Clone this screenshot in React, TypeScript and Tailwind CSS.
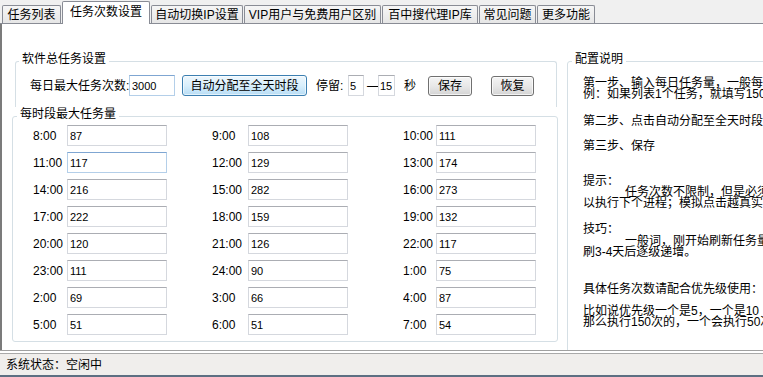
import React from 'react';

interface Tab {
  label: string;
  width: string;
  selected?: boolean;
}

interface Slot {
  time: string;
  value: string;
  active?: boolean;
}

const tabs: Tab[] = [
  { label: '任务列表', width: 'w-[59px]' },
  { label: '任务次数设置', width: 'w-[88px]', selected: true },
  { label: '自动切换IP设置', width: 'w-[92px]' },
  { label: 'VIP用户与免费用户区别', width: 'w-[137px]' },
  { label: '百中搜代理IP库', width: 'w-[96px]' },
  { label: '常见问题', width: 'w-[57px]' },
  { label: '更多功能', width: 'w-[58px]' },
];

const rows: Slot[][] = [
  [{ time: '8:00', value: '87' }, { time: '9:00', value: '108' }, { time: '10:00', value: '111' }],
  [{ time: '11:00', value: '117', active: true }, { time: '12:00', value: '129' }, { time: '13:00', value: '174' }],
  [{ time: '14:00', value: '216' }, { time: '15:00', value: '282' }, { time: '16:00', value: '273' }],
  [{ time: '17:00', value: '222' }, { time: '18:00', value: '159' }, { time: '19:00', value: '132' }],
  [{ time: '20:00', value: '120' }, { time: '21:00', value: '126' }, { time: '22:00', value: '117' }],
  [{ time: '23:00', value: '111' }, { time: '24:00', value: '90' }, { time: '1:00', value: '75' }],
  [{ time: '2:00', value: '69' }, { time: '3:00', value: '66' }, { time: '4:00', value: '87' }],
  [{ time: '5:00', value: '51' }, { time: '6:00', value: '51' }, { time: '7:00', value: '54' }],
];

// cell width + label width for the three columns
const columns = [
  { cell: 'w-[179px]', label: 'w-[34px]' },
  { cell: 'w-[191px]', label: 'w-[36px]' },
  { cell: 'w-[133px]', label: 'w-[33px]' },
];

const TextBox: React.FC<{ value: string; width: string; active?: boolean; tight?: boolean }> = ({
  value,
  width,
  active,
  tight,
}) => (
  <input
    readOnly
    value={value}
    className={`h-[21px] shrink-0 bg-white text-[11px] text-black outline-none border ${tight ? 'px-px' : 'px-[2px]'} ${
      active ? 'border-[#b4cfe9] border-t-[#7fa6d2]' : 'border-[#d5d8de] border-t-[#abadb3]'
    } ${width}`}
  />
);

const GrayButton: React.FC<{ label: string; className: string }> = ({ label, className }) => (
  <button
    className={`h-[20px] shrink-0 rounded-[3px] border border-[#707070] bg-linear-to-b from-[#f4f4f4] via-[#e8e8e8] to-[#d4d4d4] shadow-[inset_0_0_0_1px_rgba(255,255,255,0.7)] text-[12px] text-black ${className}`}
  >
    {label}
  </button>
);

const App: React.FC = () => {
  return (
    <div className="w-[763px] h-[377px] overflow-hidden bg-white text-black text-[12px] font-['Liberation_Sans','Noto_Sans_CJK_SC',sans-serif] flex flex-col">
      {/* Tab strip */}
      <div className="h-[24px] shrink-0 bg-[#f0f0f0] border-b border-[#898c95] flex items-end gap-px pl-[2px]">
        {tabs.map((tab) =>
          tab.selected ? (
            <div
              key={tab.label}
              className={`relative z-10 -mb-px h-[23px] ${tab.width} bg-white border border-b-0 border-[#898c95] rounded-t-[2px] flex items-center justify-center pb-[2px] whitespace-nowrap`}
            >
              {tab.label}
            </div>
          ) : (
            <div
              key={tab.label}
              className={`h-[18px] ${tab.width} border border-b-0 border-[#898c95] rounded-t-[2px] bg-linear-to-b from-[#f6f6f6] to-[#e6e6e6] flex items-center justify-center whitespace-nowrap`}
            >
              {tab.label}
            </div>
          )
        )}
      </div>

      {/* Page body */}
      <div className="h-[326px] shrink-0 flex border-l-2 border-[#7b7b7b] overflow-hidden">
        {/* Left column */}
        <div className="w-[565px] shrink-0 pt-[28px]">
          <fieldset className="ml-[13px] w-[542px] border border-b-0 border-[#d5dfe5] rounded-t-[3px] pb-[11px]">
            <legend className="ml-[3px] px-[3px] leading-[14px] pb-[4px]">软件总任务设置</legend>
            <div className="mt-[5px] pl-[14px] flex items-center h-[21px]">
              <span className="w-[99px] shrink-0 whitespace-nowrap">每日最大任务次数:</span>
              <TextBox value="3000" width="w-[46px]" active />
              <button className="ml-[7px] w-[125px] h-[21px] shrink-0 rounded-[3px] border border-[#3c7fb1] bg-linear-to-b from-[#eef7fd] via-[#d9effc] to-[#b8ddf5] shadow-[inset_0_0_0_1px_rgba(255,255,255,0.6)] text-[12px] text-black">
                自动分配至全天时段
              </button>
              <span className="ml-[9px] w-[32px] shrink-0 whitespace-nowrap">停留:</span>
              <TextBox value="5" width="w-[16px]" tight />
              <span className="ml-[3px] w-[11px] shrink-0 text-center">—</span>
              <TextBox value="15" width="w-[17px]" tight />
              <span className="ml-[9px] shrink-0">秒</span>
              <GrayButton label="保存" className="ml-[12px] w-[44px]" />
              <GrayButton label="恢复" className="ml-[19px] w-[43px]" />
            </div>
          </fieldset>

          <fieldset className="ml-[10px] w-[546px] border border-[#d5dfe5] rounded-[3px] pb-[6px]">
            <legend className="ml-[4px] px-[3px] leading-[14px] pb-[4px]">每时段最大任务量</legend>
            <div className="pl-[20px] flex flex-col gap-[6px]">
              {rows.map((row, r) => (
                <div key={r} className="flex">
                  {row.map((slot, c) => (
                    <div key={slot.time} className={`${columns[c].cell} shrink-0 flex items-center`}>
                      <span className={`${columns[c].label} shrink-0 whitespace-nowrap`}>{slot.time}</span>
                      <TextBox value={slot.value} width="w-[100px]" active={slot.active} />
                    </div>
                  ))}
                </div>
              ))}
            </div>
          </fieldset>
        </div>

        {/* Right column - help text */}
        <div className="pt-[28px] shrink-0">
          <fieldset className="w-[260px] h-[320px] border border-[#d5dfe5] rounded-[3px] pl-[15px]">
            <legend className="ml-[-11px] px-[3px] leading-[14px] pb-[4px]">配置说明</legend>
            <div className="leading-[11px] whitespace-nowrap">
              <p className="mt-[8px]">
                第一步、输入每日任务量，一般每
                <br />
                例：如果列表1个任务，就填写150
              </p>
              <p className="mt-[16px]">第二步、点击自动分配至全天时段</p>
              <p className="mt-[14px]">第三步、保存</p>
              <p className="mt-[24px]">提示：</p>
              <p className="indent-[42px]">
                任务次数不限制，但是必须
                <br />
                以执行下个进程；模拟点击越真实
              </p>
              <p className="mt-[15px]">技巧：</p>
              <p className="mt-px indent-[42px]">
                一般词，刚开始刷新任务量
                <br />
                刷3-4天后逐级递增。
              </p>
              <p className="mt-[26px]">具体任务次数请配合优先级使用：</p>
              <p className="mt-[11px]">
                比如说优先级一个是5，一个是10
                <br />
                那么执行150次的，一个会执行50次
              </p>
            </div>
          </fieldset>
        </div>
      </div>

      {/* Status bar */}
      <div className="h-[27px] shrink-0 border-t border-[#a0a0a0] border-b-2 border-b-[#5d6f82] bg-white">
        <div className="mt-[2px] h-[22px] border-t border-[#a9a9a9] bg-[#f0eeec] flex items-center pl-[6px]">
          系统状态：空闲中
        </div>
      </div>
    </div>
  );
};

export default App;
